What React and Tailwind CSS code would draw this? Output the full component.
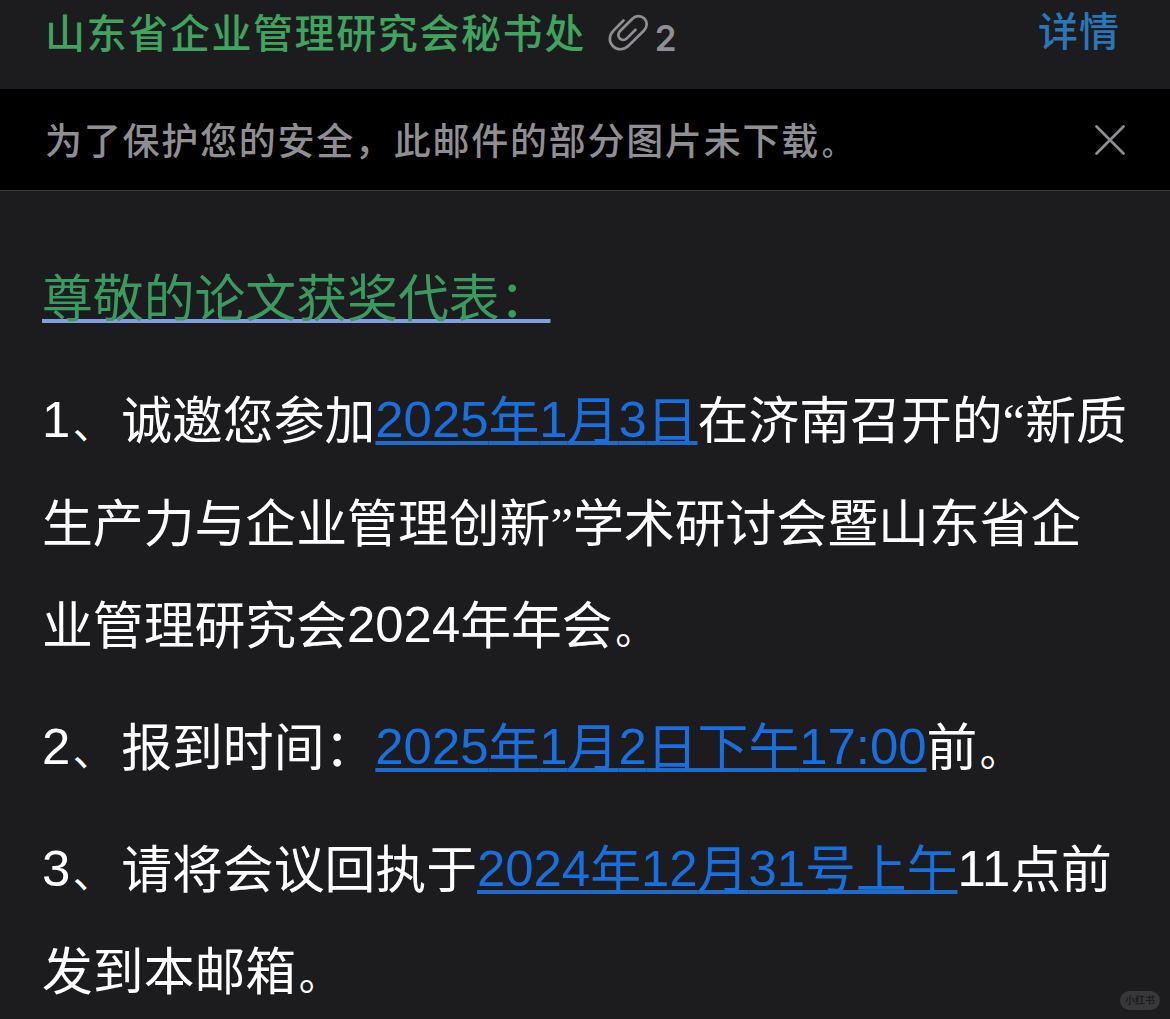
import { X } from "lucide-react";

const mailText = "font-['Liberation_Sans','Noto_Sans_CJK_SC',sans-serif]";
const uiText = "font-['Inter','Noto_Sans_CJK_SC',sans-serif]";

// Full-width punctuation drawn a bit smaller, still one character wide.
function Mark({ children }) {
  return (
    <span className="inline-block w-[1em] pl-[0.05em] leading-none">
      <span className="text-[0.8em]">{children}</span>
    </span>
  );
}

// Digits sit a little higher than the Chinese glyphs around them.
function Runs({ text, cjk = "", digits = "" }) {
  return text.split(/([0-9:]+|[、。])/).map((run, i) => {
    if (run === "、" || run === "。") {
      return <Mark key={i}>{run}</Mark>;
    }
    return (
      <span key={i} className={i % 2 ? `align-[2px] leading-none ${digits}` : cjk}>
        {run}
      </span>
    );
  });
}

function DateLink({ text }) {
  const line =
    "underline decoration-[#1f6bc8] decoration-[4px] [text-decoration-skip-ink:none]";

  return (
    <a href="#" className="text-[#176fe0]">
      <Runs
        text={text}
        cjk={`${line} underline-offset-[2px]`}
        digits={`${line} underline-offset-[4px]`}
      />
    </a>
  );
}

function Quote({ children }) {
  return <span className="font-['Liberation_Serif',serif]">{children}</span>;
}

function PaperclipIcon() {
  return (
    <svg
      width="42"
      height="40"
      viewBox="0 0 42 40"
      fill="none"
      stroke="#8e8e93"
      strokeWidth="2.7"
      strokeLinecap="round"
      strokeLinejoin="round"
    >
      <path d="M15.5 7.5 L5.5 17.6 C0.8 22.3 0.6 29 5 33.2 C9.3 37.4 16 37.2 20.5 32.8 L36 17.5 C39.4 14.1 39.6 8.8 36.3 5.5 C33 2.2 27.8 2.3 24.4 5.7 L12.3 17.8 C9.8 20.3 9.7 23.5 11.8 25.5 C13.9 27.5 17 27.3 19.4 24.9 L27.5 16.7" />
    </svg>
  );
}

export default function App() {
  return (
    <div className="relative flex h-[1019px] w-[1170px] flex-col overflow-hidden bg-[#1c1c1e]">
      <header
        className={`flex h-[89px] shrink-0 justify-between pr-[50px] pl-[45px] font-medium ${uiText}`}
      >
        <div className="flex">
          <span className="text-[40px] leading-[68px] tracking-[1.6px] text-[#3fa45f]">
            山东省企业管理研究会秘书处
          </span>
          <span className="mt-[13px] ml-[22px]">
            <PaperclipIcon />
          </span>
          <span className="ml-[5px] text-[35px] leading-[76px] font-semibold text-[#8e8e93]">
            2
          </span>
        </div>
        <button className="h-[62px] text-[40px] leading-[63px] tracking-[1px] text-[#2a76b8]">
          详情
        </button>
      </header>

      <div
        className={`flex h-[102px] shrink-0 items-center justify-between border-b border-[#3a3a3c] bg-black pr-[33px] pl-[45px] text-[#8e8e93] ${uiText}`}
      >
        <p className="relative top-[2px] text-[37px] leading-[60px] font-medium tracking-[1.75px]">
          为了保护您的安全，此邮件的部分图片未下载<Mark>。</Mark>
        </p>
        <button>
          <X size={54} strokeWidth={1.2} />
        </button>
      </div>

      <main
        className={`flex flex-col gap-[20.3px] pt-[58px] pl-[42px] text-[50.85px] leading-[101.7px] whitespace-nowrap text-white ${mailText}`}
      >
        <p>
          <span className="text-[#3a9b60] underline decoration-[#849fe0] decoration-[4px] underline-offset-[2px] [text-decoration-skip-ink:none]">
            尊敬的论文获奖代表：
          </span>
        </p>
        <p>
          <Runs text="1、诚邀您参加" />
          <DateLink text="2025年1月3日" />
          在济南召开的<Quote>“</Quote>新质
          <br />
          生产力与企业管理创新<Quote>”</Quote>学术研讨会暨山东省企
          <br />
          <Runs text="业管理研究会2024年年会。" />
        </p>
        <p>
          <Runs text="2、报到时间：" />
          <DateLink text="2025年1月2日下午17:00" />
          <Runs text="前。" />
        </p>
        <p>
          <Runs text="3、请将会议回执于" />
          <DateLink text="2024年12月31号上午" />
          <Runs text="11点前" />
          <br />
          <Runs text="发到本邮箱。" />
        </p>
      </main>

      <span
        className={`absolute right-[10px] bottom-[9px] flex h-[19px] w-[40px] items-center justify-center rounded-full bg-[#38383a] text-[10px] font-bold text-[#1e1e20] ${uiText}`}
      >
        小红书
      </span>
    </div>
  );
}
